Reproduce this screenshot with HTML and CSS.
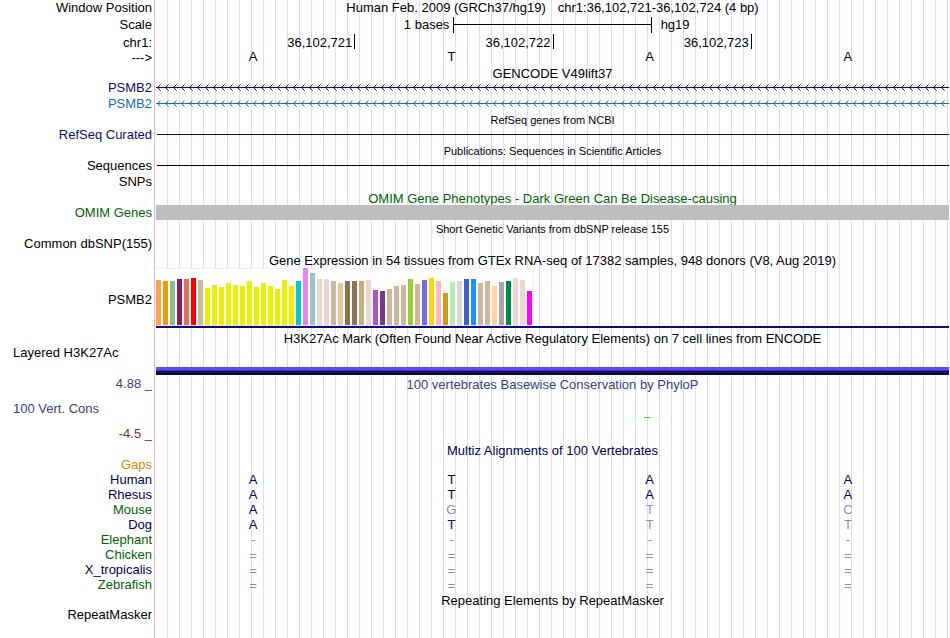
FILE: index.html
```
<!DOCTYPE html>
<html lang="en">
<head>
<title>Human chr1:36,102,721-36,102,724</title>
<meta charset="utf-8">
<meta name="viewport" content="width=device-width, initial-scale=1">
<link rel="stylesheet" href="styles.css">
</head>

<body>

<div class="browser">

<div class="row tall"><div class="label">Window Position</div>
	<div class="track position"><span>Human Feb. 2009 (GRCh37/hg19)</span><span>chr1:36,102,721-36,102,724 (4 bp)</span></div></div>
<div class="row tall"><div class="label">Scale</div>
	<div class="track scale"><span class="scaleleft">1 bases</span><span class="scalebar"></span><span class="scaleright">hg19</span></div></div>
<div class="row coords"><div class="label">chr1:</div>
	<div class="track ruler"><span>36,102,721</span><span>36,102,722</span><span>36,102,723</span><span></span></div></div>
<div class="row short"><div class="label">---&gt;</div>
	<div class="track bases ref"><span>A</span><span>T</span><span>A</span><span>A</span></div></div>

<div class="row short"><div class="label"></div><div class="track title">GENCODE V49lift37</div></div>
<div class="row"><div class="label navy">PSMB2</div>
	<div class="track navy"><svg class="intron" width="100%" height="16" aria-hidden="true">
		<defs><pattern id="arrows" width="8" height="16" patternUnits="userSpaceOnUse">
			<path d="M4.5 4.5L1.5 7.5L4.5 10.5" fill="none" stroke="#0c0c78"/>
		</pattern></defs>
		<rect width="100%" height="16" fill="url(#arrows)"/>
		<rect y="7" width="100%" height="1" fill="#0c0c78"/>
	</svg></div></div>
<div class="row"><div class="label blue">PSMB2</div>
	<div class="track blue"><svg class="intron" width="100%" height="16" aria-hidden="true">
		<defs><pattern id="arrows2" width="8" height="16" patternUnits="userSpaceOnUse">
			<path d="M4.5 4.5L1.5 7.5L4.5 10.5" fill="none" stroke="#1470b0"/>
		</pattern></defs>
		<rect width="100%" height="16" fill="url(#arrows2)"/>
		<rect y="7" width="100%" height="1" fill="#1470b0"/>
	</svg></div></div>

<div class="row short"><div class="label"></div><div class="track title small">RefSeq genes from NCBI</div></div>
<div class="row"><div class="label navy">RefSeq Curated</div><div class="track navy"><div class="line"></div></div></div>

<div class="row short"><div class="label"></div><div class="track title small">Publications: Sequences in Scientific Articles</div></div>
<div class="row"><div class="label">Sequences</div><div class="track"><div class="line"></div></div></div>
<div class="row"><div class="label">SNPs</div><div class="track"></div></div>

<div class="row short"><div class="label"></div><div class="track title green">OMIM Gene Phenotypes - Dark Green Can Be Disease-causing</div></div>
<div class="row"><div class="label green">OMIM Genes</div><div class="track"><div class="omim"></div></div></div>

<div class="row short"><div class="label"></div><div class="track title small">Short Genetic Variants from dbSNP release 155</div></div>
<div class="row"><div class="label">Common dbSNP(155)</div><div class="track"></div></div>

<div class="row short"><div class="label"></div><div class="track title">Gene Expression in 54 tissues from GTEx RNA-seq of 17382 samples, 948 donors (V8, Aug 2019)</div></div>
<div class="row gtex"><div class="label">PSMB2</div>
	<div class="track"><div id="tissues" class="tissues"></div><div class="model"></div></div></div>

<div class="row short"><div class="label"></div><div class="track title">H3K27Ac Mark (Often Found Near Active Regulatory Elements) on 7 cell lines from ENCODE</div></div>
<div class="row layered"><div class="label left">Layered H3K27Ac</div><div class="track"><div class="signal"></div></div></div>

<div class="row short"><div class="label cons">4.88 _</div><div class="track title cons">100 vertebrates Basewise Conservation by PhyloP</div></div>
<div class="row wiggle"><div class="label left cons">100 Vert. Cons</div><div class="track"><div class="score"></div></div></div>
<div class="row"><div class="label neg">-4.5 _</div><div class="track"></div></div>

<div class="row short"><div class="label"></div><div class="track title species">Multiz Alignments of 100 Vertebrates</div></div>
<div class="row short"><div class="label gaps">Gaps</div><div class="track"></div></div>
<div class="row short"><div class="label species">Human</div>
	<div class="track bases"><span>A</span><span>T</span><span>A</span><span>A</span></div></div>
<div class="row short"><div class="label species">Rhesus</div>
	<div class="track bases"><span>A</span><span>T</span><span>A</span><span>A</span></div></div>
<div class="row short"><div class="label green">Mouse</div>
	<div class="track bases"><span>A</span><span class="dim">G</span><span class="dim">T</span><span class="dim">C</span></div></div>
<div class="row short"><div class="label species">Dog</div>
	<div class="track bases"><span>A</span><span>T</span><span class="dim">T</span><span class="dim">T</span></div></div>
<div class="row short"><div class="label green">Elephant</div>
	<div class="track bases dim"><span>-</span><span>-</span><span>-</span><span>-</span></div></div>
<div class="row short"><div class="label green">Chicken</div>
	<div class="track bases dim nodata"><span>=</span><span>=</span><span>=</span><span>=</span></div></div>
<div class="row short"><div class="label species">X_tropicalis</div>
	<div class="track bases dim nodata"><span>=</span><span>=</span><span>=</span><span>=</span></div></div>
<div class="row short"><div class="label green">Zebrafish</div>
	<div class="track bases dim nodata"><span>=</span><span>=</span><span>=</span><span>=</span></div></div>

<div class="row short"><div class="label"></div><div class="track title">Repeating Elements by RepeatMasker</div></div>
<div class="row short"><div class="label">RepeatMasker</div><div class="track"></div></div>

</div>

<script>

// one bar per tissue: height, color
var tissues = [
	[45, "#ffa54f"], [44, "#ee9a00"], [44, "#8fbc8f"], [46, "#8b1c62"], [46, "#ee6a50"], [47, "#ff0000"],
	[45, "#cdb79e"], [37, "#eeee00"], [40, "#eeee00"], [38, "#eeee00"], [42, "#eeee00"], [40, "#eeee00"],
	[39, "#eeee00"], [44, "#eeee00"], [38, "#eeee00"], [42, "#eeee00"], [39, "#eeee00"], [36, "#eeee00"],
	[45, "#eeee00"], [39, "#eeee00"], [44, "#00cdcd"], [57, "#ee82ee"], [52, "#9ac0cd"], [46, "#eed5d2"],
	[46, "#eed5d2"], [44, "#cdb79e"], [42, "#eec591"], [44, "#8b7355"], [44, "#8b7355"], [44, "#cdaa7d"],
	[45, "#eed5d2"], [35, "#b452cd"], [34, "#7a378b"], [36, "#cdb79e"], [39, "#cdb79e"], [40, "#cdb79e"],
	[46, "#9acd32"], [41, "#cdb79e"], [45, "#7a67ee"], [47, "#ffd700"], [44, "#ffb6c1"], [32, "#cd9b1d"],
	[43, "#b4eeb4"], [44, "#d9d9d9"], [46, "#3a5fcd"], [46, "#1e90ff"], [42, "#cdb79e"], [44, "#cdb79e"],
	[39, "#ffd39b"], [43, "#a6a6a6"], [44, "#008b45"], [47, "#eed5d2"], [45, "#eed5d2"], [34, "#ff00ff"]
];

function drawTissues() {
	var graph = document.getElementById("tissues");
	for (var i = 0; i < tissues.length; i++) {
		var bar = document.createElement("span");
		bar.style.height = tissues[i][0] + "px";
		bar.style.backgroundColor = tissues[i][1];
		graph.appendChild(bar);
	}
}

drawTissues();

</script>

</body>
</html>
```

FILE: styles.css
```
body {
	margin: 0;
	background-color: #ffffff;
	color: #000000;
	font-family: "Liberation Sans", Arial, Helvetica, sans-serif;
	font-size: 13px;
}
.browser {
	min-height: 100vh;
	box-sizing: border-box;
	padding-right: 1px;
	background-image:
		linear-gradient(#ffb4b4, #ffb4b4),
		linear-gradient(#ffffff, #ffffff),
		repeating-linear-gradient(to right, #dcdcf5 0, #dcdcf5 1px, transparent 1px, transparent 12px);
	background-size: 1px 100%, 156px 100%, 100% 100%;
	background-position: 154px 0, 0 0, 11px 0;
	background-repeat: no-repeat;
}
.row {
	display: grid;
	grid-template-columns: 156px minmax(0, 1fr);
	height: 16px;
	line-height: 16px;
	white-space: nowrap;
}
.tall {
	height: 17px;
}
.short {
	height: 15px;
}
.coords {
	line-height: 18px;
}
.label {
	padding-right: 4px;
	text-align: right;
}
.left {
	padding-left: 13px;
	text-align: left;
}
.title {
	line-height: 18px;
	text-align: center;
}
.small {
	font-size: 11px;
	line-height: 16px;
}
.position {
	display: flex;
	justify-content: center;
	gap: 12px;
}
.navy {
	color: #0c0c78;
}
.blue {
	color: #1470b0;
}
.green {
	color: #006400;
}
.species {
	color: #000064;
}
.cons {
	color: #3c3c8c;
}
.neg {
	color: #783232;
}
.gaps {
	color: #e68200;
}
.scale {
	display: grid;
	grid-template-columns: 1fr 25% 1fr;
}
.scaleleft {
	padding-right: 4px;
	text-align: right;
}
.scaleright {
	padding-left: 9px;
}
.scalebar {
	height: 16px;
	border: solid #000000;
	border-width: 0 1px;
	background: linear-gradient(#000000, #000000) 0 7px / 100% 1px no-repeat;
}
.ruler, .bases {
	display: grid;
	grid-template-columns: repeat(4, 1fr);
}
.ruler span {
	height: 15px;
	padding-right: 2px;
	text-align: right;
}
.ruler span + span {
	border-left: 1px solid #000000;
}
.bases {
	color: #000064;
	text-align: center;
}
.bases span {
	padding-right: 4px;
}
.ref {
	color: #000000;
	line-height: 13px;
}
.nodata {
	line-height: 18px;
}
.bases .dim, .bases.dim {
	color: #8c8cb9;
}
.intron {
	display: block;
}
.line {
	height: 1px;
	margin: 7px 0 0 1px;
	background-color: currentColor;
}
.omim {
	height: 15px;
	background-color: #bebebe;
}
.gtex {
	height: 63px;
	line-height: 65px;
}
.tissues {
	display: flex;
	align-items: flex-end;
	gap: 2px;
	width: 376px;
	height: 57px;
	margin-top: 1px;
	padding-right: 1px;
	border-right: 1px solid #f0f0f0;
	border-bottom: 1px solid #e6e6e6;
	background: linear-gradient(#f0f0f0, #f0f0f0) 0 0 / 100% 1px no-repeat #ffffff;
}
.tissues span {
	flex: 1;
}
.model {
	height: 2px;
	background-color: #0c0c78;
}
.layered {
	height: 31px;
}
.signal {
	height: 8px;
	margin-top: 22px;
	background: linear-gradient(#6a44ff 3px, #3038d0 3px, #3038d0 4px, #101060 4px, #101060 5px, #1c0c50 5px, #1c0c50 6px, #140828 6px);
}
.wiggle {
	height: 35px;
	line-height: 36px;
}
.score {
	width: 38px;
	height: 1px;
	margin: 26px 0 0 calc(60% - 4px);
	background: linear-gradient(#1edc1e, #1edc1e) 16px 0 / 6px 1px no-repeat #e6fae6;
}
```
